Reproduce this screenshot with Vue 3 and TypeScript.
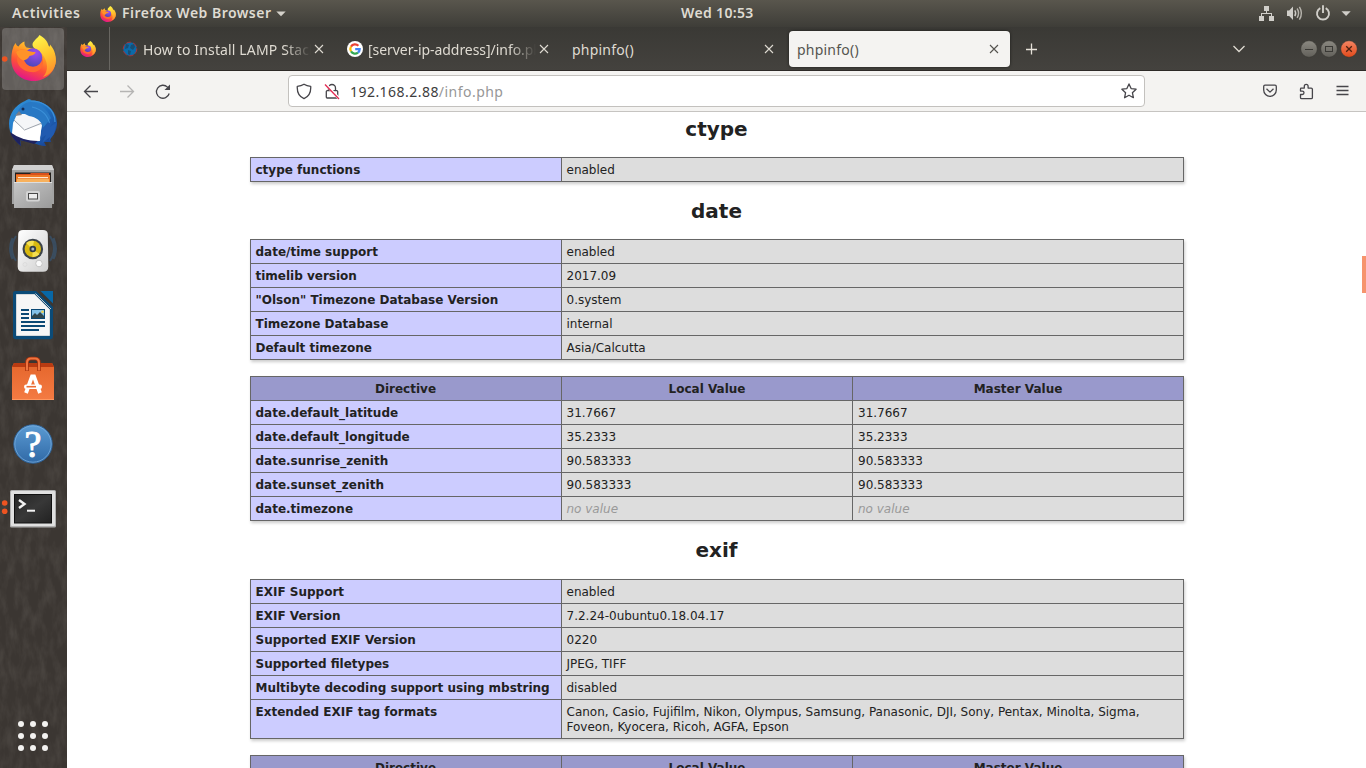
<script setup lang="ts">
interface Tab {
  title: string
  icon?: 'globe' | 'google'
  active?: boolean
}
interface Sheet {
  title?: string
  head?: string[]
  rows: string[][]
}

const tabs: Tab[] = [
  { title: 'How to Install LAMP Stack', icon: 'globe' },
  { title: '[server-ip-address]/info.php', icon: 'google' },
  { title: 'phpinfo()' },
  { title: 'phpinfo()', active: true },
]

const directiveHead = ['Directive', 'Local Value', 'Master Value']

const sheets: Sheet[] = [
  { title: 'ctype', rows: [['ctype functions', 'enabled']] },
  {
    title: 'date',
    rows: [
      ['date/time support', 'enabled'],
      ['timelib version', '2017.09'],
      ['"Olson" Timezone Database Version', '0.system'],
      ['Timezone Database', 'internal'],
      ['Default timezone', 'Asia/Calcutta'],
    ],
  },
  {
    head: directiveHead,
    rows: [
      ['date.default_latitude', '31.7667', '31.7667'],
      ['date.default_longitude', '35.2333', '35.2333'],
      ['date.sunrise_zenith', '90.583333', '90.583333'],
      ['date.sunset_zenith', '90.583333', '90.583333'],
      ['date.timezone', 'no value', 'no value'],
    ],
  },
  {
    title: 'exif',
    rows: [
      ['EXIF Support', 'enabled'],
      ['EXIF Version', '7.2.24-0ubuntu0.18.04.17'],
      ['Supported EXIF Version', '0220'],
      ['Supported filetypes', 'JPEG, TIFF'],
      ['Multibyte decoding support using mbstring', 'disabled'],
      [
        'Extended EXIF tag formats',
        'Canon, Casio, Fujifilm, Nikon, Olympus, Samsung, Panasonic, DJI, Sony, Pentax, Minolta, Sigma, Foveon, Kyocera, Ricoh, AGFA, Epson',
      ],
    ],
  },
  { head: directiveHead, rows: [] },
]
</script>

<template>
  <div class="desktop">
    <svg class="defs" width="0" height="0" aria-hidden="true">
      <defs>
        <linearGradient id="ffBody" x1="0.8" y1="0.05" x2="0.35" y2="1">
          <stop offset="0" stop-color="#ffe23d" />
          <stop offset="0.35" stop-color="#ff9a24" />
          <stop offset="0.65" stop-color="#ff5038" />
          <stop offset="1" stop-color="#e0148c" />
        </linearGradient>
        <linearGradient id="ffFlame" x1="0.3" y1="0" x2="0.6" y2="1">
          <stop offset="0" stop-color="#fff44a" />
          <stop offset="0.5" stop-color="#ffc72e" />
          <stop offset="1" stop-color="#ff8b2c" />
        </linearGradient>
        <radialGradient id="ffCore" cx="0.65" cy="0.25" r="0.8">
          <stop offset="0" stop-color="#a04bf0" />
          <stop offset="1" stop-color="#4a48b8" />
        </radialGradient>
        <symbol id="firefox" viewBox="0 0 45 46">
          <path d="M4.5 8 C5.2 10 6 11 7.500 11.500 C9 9 11 7.500 13.500 6.500 C13.200 9 13.800 11 15.500 12.500 L24 14 L36 10 C42 14 45 20 44.800 26 C44 38 34 46 22.500 46 C10 46 0.5 37 0.3 25 C0.2 18 1.500 12 4.500 8Z" fill="url(#ffBody)" />
          <path d="M28.500 0 C34 3 37 7 38 12 C39 11.500 39 10.500 39 9.500 C43 14 45 19 44.800 26 C44.300 34 39 40 32 42 C38 36 37 26 31 19 C27 15 22 14 21.500 10 C21.500 6 26 4 28.500 0Z" fill="url(#ffFlame)" />
          <path d="M5 17 C7 14.500 11 13.800 15.500 15 C24 20 31 20 32 25 C33 33 27 38 20 37 C11 36 6 30 6 24 C6 21 6 19 5 17Z" fill="#ff6a30" />
          <circle cx="22" cy="22.500" r="9.300" fill="url(#ffCore)" />
          <path d="M5 17 C7 14.500 11 13.800 15.500 15 C18 16.500 21 17 24.500 17 C24.500 19.500 21 20.500 18.500 21 C17 24 14.500 25 12 25.500 C9 24 6 21 5 17Z" fill="#ff9328" />
        </symbol>
      </defs>
    </svg>

    <header class="topbar">
      <span class="activities">Activities</span>
      <span class="app">
        <svg class="app-icon" width="16" height="16"><use href="#firefox" /></svg>
        <span class="app-name">Firefox Web Browser</span>
        <svg width="10" height="6"><path d="M0.300 0.500h9.400L5 5.300z" fill="#d4d1ca" /></svg>
      </span>
      <span class="clock">Wed 10:53</span>
      <svg class="tray" width="100" height="27">
        <g fill="#d0cec9">
          <rect x="11" y="6" width="5" height="5" />
          <rect x="6" y="16" width="5" height="5" />
          <rect x="16" y="16" width="5" height="5" />
          <path d="M13 11h1v2h5v3h-1v-2H9v2H8v-3h5z" />
          <path d="M34 10.500h2.200L40 6.500v13.500l-3.800-4H34z" />
          <path d="M88.500 11.200h9.200l-4.600 4.700z" />
        </g>
        <g fill="none" stroke="#d0cec9">
          <path d="M41.800 10.300q1.800 2.900 0 5.800" stroke-width="1.400" />
          <path d="M44.100 8.500q3 4.700 0 9.400" stroke="#b7b4ad" stroke-width="1.400" />
          <path d="M46.400 6.800q4 6.400 0 12.800" stroke="#b7b4ad" stroke-width="1.400" />
          <path d="M67.300 8.200a6 6 0 1 0 5.400 0" stroke-width="1.900" />
          <path d="M70 5.200v7.800" stroke-width="1.900" />
        </g>
      </svg>
    </header>

    <div class="workspace">
      <aside class="dock">
        <svg class="texture" width="67" height="741">
          <filter id="wood" x="0" y="0" width="100%" height="100%">
            <feTurbulence type="fractalNoise" baseFrequency="0.13 0.05" numOctaves="4" seed="7" />
            <feColorMatrix values="0 0 0 0 0.42  0 0 0 0 0.39  0 0 0 0 0.35  1.500 0 0 0 -0.550" />
          </filter>
          <rect width="67" height="741" filter="url(#wood)" />
        </svg>

        <div class="launcher">
          <svg width="67" height="64">
            <rect x="2" y="1" width="62" height="62" rx="4" fill="#fff" opacity="0.2" />
            <circle cx="4.700" cy="32" r="2.800" fill="#ee5421" />
            <use href="#firefox" x="11" y="8" width="45" height="46" />
          </svg>
        </div>

        <div class="launcher">
          <svg width="67" height="64">
            <defs>
              <linearGradient id="tb" x1="0" y1="0" x2="1" y2="1">
                <stop offset="0" stop-color="#3499e0" />
                <stop offset="0.5" stop-color="#2070c0" />
                <stop offset="1" stop-color="#16398c" />
              </linearGradient>
            </defs>
            <path d="M25 10 C28 7.500 31 8 31 9.500 C44 9 57 19 57 32 C57 38 55 43 50 47 L51 51 L44 51 L46 55 C40 55 37 53 34 52 L20 49 L21 55 C15 50 9 43 9 33 C9 23 15 14 25 10Z" fill="url(#tb)" />
            <path d="M13 32 L17 23 L39 23 L42 30 L40 50 C32 50 25 49 18 47 L12 43Z" fill="#f5f6f8" />
            <path d="M14 31 L24 38 L42 34 L39 50 Q27 51 12 44Z" fill="#fff" />
            <path d="M14 29 L24.500 39 L42 32" fill="none" stroke="#9da3ac" stroke-width="1" />
            <path d="M17 24 C18 17 24 11 31 11 C40 12 47 18 51 27 L43 37 C42 30 36 26 29 25 L23 22Z" fill="#2878c4" />
            <path d="M31 10 C42 10 55 17 55 31 M32 16 C41 18 48 24 50 34" fill="none" stroke="#3b90d8" stroke-width="1.200" />
            <path d="M57 31 L50 36 L53 29 L43 37 L40 48 L46 44 L42 52 L50 46 L49 50 L54 43Z" fill="#215bb0" />
            <path d="M10 41 Q22 50 38 50 L34 53 L20 49 L21 55 Q12 48 10 41Z" fill="#1e225f" />
            <circle cx="23" cy="18" r="1.500" fill="#132a54" />
            <path d="M19 20 L15 25 L22 24Z" fill="#7b7f89" />
          </svg>
        </div>

        <div class="launcher">
          <svg width="67" height="64">
            <defs>
              <linearGradient id="cab" x1="0" y1="0" x2="1" y2="1">
                <stop offset="0" stop-color="#c6c6c6" />
                <stop offset="1" stop-color="#9a9a9a" />
              </linearGradient>
            </defs>
            <path d="M14 10h38l2 5v34H12V15z" fill="#a3a3a3" />
            <path d="M14 10h38l2 5H12z" fill="#d0d0d0" />
            <rect x="15" y="17.500" width="36" height="10" fill="#24201d" />
            <path d="M16 19h14l1-1h18v9H16z" fill="#d9501c" />
            <rect x="16" y="20" width="34" height="7" fill="#ee7925" />
            <rect x="18" y="22" width="30" height="1.200" fill="#ffe7cf" />
            <path d="M17 24h32v3H17z" fill="#f8b15c" />
            <rect x="14" y="27" width="38" height="26" rx="0.500" fill="url(#cab)" />
            <path d="M14 27.500h38" stroke="#dedede" />
            <rect x="26" y="36" width="14" height="10.500" rx="2" fill="#d4d4d4" />
            <rect x="28.500" y="38.500" width="9" height="5.500" fill="#ececec" stroke="#494949" />
          </svg>
        </div>

        <div class="launcher">
          <svg width="67" height="64">
            <defs>
              <linearGradient id="spk" x1="0" y1="0" x2="1" y2="1">
                <stop offset="0" stop-color="#fff" />
                <stop offset="1" stop-color="#cfcfcf" />
              </linearGradient>
            </defs>
            <g fill="none" stroke="#375d82" stroke-width="2" opacity="0.55">
              <path d="M16 17q-8 13 0 25M12.500 19q-5 11 0 21M50 17q8 13 0 25M53.500 19q5 11 0 21" />
            </g>
            <path d="M23 11h20q4.500 0 4.800 4L48.300 47q0.200 5.500-5.300 5.700H23q-5.500-0.200-5.300-5.700L18.200 15q0.300-4 4.800-4z" fill="url(#spk)" />
            <circle cx="32.800" cy="30" r="10.300" fill="#3c434a" />
            <circle cx="32.800" cy="30" r="8.200" fill="#d9b910" />
            <path d="M32.500 30L26 24a9 9 0 0 1 8-2zM32.500 30l7 5a8 8 0 0 1-7 3z" fill="#f5df51" />
            <circle cx="32.800" cy="30" r="3.300" fill="#333c46" />
            <circle cx="32.800" cy="30" r="1.500" fill="#aeb8bf" />
            <circle cx="39" cy="44.500" r="3.300" fill="#fafafa" stroke="#c4c4c4" />
            <circle cx="25" cy="45.500" r="2" fill="none" stroke="#dcdcdc" />
          </svg>
        </div>

        <div class="launcher">
          <svg width="67" height="64">
            <path d="M15.500 8H36l17 17v31.500q0 2.500-2.500 2.500h-35q-2.500 0-2.500-2.500v-46Q13 8 15.500 8z" transform="matrix(1 0 0 0.945 0 0.440)" fill="#0b4b78" />
            <path d="M16.500 11.500h18.200L49.500 26.500v26h-33z" fill="#f6f6f6" stroke="#d5d9dc" />
            <path d="M40.500 8H53v12.500z" fill="#0867a6" />
            <path d="M35.500 10.500L51 26" stroke="#c2c9ce" stroke-width="1" />
            <g fill="#0a4874">
              <path d="M21 26h8v2h-8zM21 30h8v2h-8zM21 34h8v2h-8zM21 38h24v2H21zM21 42h24v2H21zM21 46h18v2H21z" />
              <rect x="31" y="26" width="14" height="10" />
            </g>
            <rect x="32" y="27" width="12" height="8" fill="#83c1e8" />
            <path d="M32 35v-2l3-3 2 2 3-3 4 4v2z" fill="#31464c" />
            <circle cx="42.500" cy="28.700" r="1.300" fill="#f7d348" />
          </svg>
        </div>

        <div class="launcher">
          <svg width="67" height="64">
            <defs>
              <linearGradient id="bag" x1="0" y1="0" x2="0" y2="1">
                <stop offset="0" stop-color="#e5662c" />
                <stop offset="1" stop-color="#f47b43" />
              </linearGradient>
            </defs>
            <path d="M14 16h38l2 4v33H12V20z" fill="url(#bag)" />
            <path d="M14 16h38l2 4H12z" fill="#b93b12" />
            <path d="M12 52.500h42" stroke="#ff9760" />
            <path d="M27 24v-8q0-4.500 4-4.500h4q4 0 4 4.500v8" fill="none" stroke="#a7330e" stroke-width="3.600" />
            <path d="M27 23.500v-7.500q0-4.500 4-4.500h4q4 0 4 4.500v7.500" fill="none" stroke="#f07540" stroke-width="2" />
            <path d="M26 46L32 29.500h2L40 46" fill="none" stroke="#fff" stroke-width="3.800" />
            <rect x="24" y="37.500" width="18" height="4.500" rx="2.200" fill="#fff" />
            <path d="M26.500 39.700h9.500" stroke="#ea6c34" stroke-width="1.600" />
          </svg>
        </div>

        <div class="launcher">
          <svg width="67" height="64">
            <defs>
              <linearGradient id="help" x1="0" y1="0" x2="0" y2="1">
                <stop offset="0" stop-color="#5b9bd3" />
                <stop offset="1" stop-color="#3069a6" />
              </linearGradient>
            </defs>
            <circle cx="33" cy="33" r="19.200" fill="url(#help)" stroke="#2e649c" />
            <circle cx="33" cy="33" r="18.200" fill="none" stroke="#7fb2df" opacity="0.700" />
            <text x="33" y="45.500" class="help-mark">?</text>
          </svg>
        </div>

        <div class="launcher">
          <svg width="67" height="64">
            <defs>
              <linearGradient id="term" x1="0" y1="0" x2="1" y2="1">
                <stop offset="0" stop-color="#262626" />
                <stop offset="0.500" stop-color="#383838" />
                <stop offset="1" stop-color="#222" />
              </linearGradient>
            </defs>
            <circle cx="4.700" cy="28" r="2.800" fill="#ee5421" />
            <circle cx="4.700" cy="36.300" r="2.800" fill="#ee5421" />
            <rect x="10" y="15" width="46" height="37.500" rx="1.500" fill="#b0b0b0" />
            <rect x="11" y="16" width="44" height="35" rx="1" fill="#e0e0e0" />
            <rect x="14" y="19" width="38" height="29.500" fill="#111" />
            <rect x="15" y="20" width="36" height="27.500" fill="url(#term)" />
            <path d="M19 25l5.500 4-5.500 4" fill="none" stroke="#f2f2f2" stroke-width="2.400" />
            <path d="M27 35.700h8" stroke="#f2f2f2" stroke-width="2" />
          </svg>
        </div>

        <svg class="apps" width="67" height="64">
          <g fill="#f3f2f0">
            <template v-for="r in 3" :key="r">
              <circle v-for="c in 3" :key="c" :cx="9 + c * 12" :cy="20 + (r - 1) * 12" r="3" />
            </template>
          </g>
        </svg>
      </aside>

      <main class="browser">
        <div class="tabstrip">
          <div class="pinned">
            <svg width="16" height="16"><use href="#firefox" /></svg>
          </div>
          <div v-for="(t, i) in tabs" :key="i" class="tab" :class="[t.icon, { active: t.active }]">
            <svg v-if="t.icon === 'globe'" class="favicon" width="16" height="16">
              <circle cx="8" cy="8" r="6.800" fill="#0b6aa8" stroke="#a5323c" stroke-dasharray="5 2" />
              <path d="M4 3l3 1-1 3-3 1zM9 4l3-1 1 3-2 3-3-2zM6 9l3 1-1 4-2-1z" fill="#174e74" />
            </svg>
            <svg v-if="t.icon === 'google'" class="favicon" width="16" height="16">
              <circle cx="8" cy="8" r="8" fill="#fff" />
              <g fill="none" stroke-width="2.200">
                <path d="M4 5.600A4.700 4.700 0 0 1 11.400 4.800" stroke="#ea4335" />
                <path d="M4 5.600A4.700 4.700 0 0 0 4 10.400" stroke="#fbbc05" />
                <path d="M4 10.400A4.700 4.700 0 0 0 11 11.600" stroke="#34a853" />
                <path d="M11 11.600A4.700 4.700 0 0 0 12.700 8.100H8.200" stroke="#4285f4" />
              </g>
            </svg>
            <span class="title" :class="{ faded: t.icon }">{{ t.title }}</span>
            <svg class="close" width="10" height="10">
              <path d="M1 1l8 8M9 1l-8 8" fill="none" stroke="currentColor" stroke-width="1.100" />
            </svg>
          </div>
          <svg class="plus" width="12" height="12">
            <path d="M6.500 0.500v11M1 6.500h11" stroke="#e6e2d9" stroke-width="1.300" />
          </svg>
          <svg class="chev" width="14" height="8">
            <path d="M1.500 1L7 6.500 12.500 1" fill="none" stroke="#dfdbd2" stroke-width="1.300" />
          </svg>
          <svg class="controls" width="58" height="18">
            <defs>
              <linearGradient id="gbtn" x1="0" y1="0" x2="0" y2="1">
                <stop offset="0" stop-color="#8b8981" />
                <stop offset="1" stop-color="#62605a" />
              </linearGradient>
              <linearGradient id="obtn" x1="0" y1="0" x2="0" y2="1">
                <stop offset="0" stop-color="#f58563" />
                <stop offset="1" stop-color="#e14a1b" />
              </linearGradient>
            </defs>
            <g stroke="#33322e" stroke-width="0.400">
              <circle cx="9" cy="9" r="8.200" fill="url(#gbtn)" />
              <circle cx="29" cy="9" r="8.200" fill="url(#gbtn)" />
              <circle cx="49" cy="9" r="8.200" fill="url(#obtn)" />
            </g>
            <g fill="none" stroke="#3a3935">
              <path d="M5 9.500h8" />
              <rect x="25.500" y="6.500" width="7" height="5" />
              <path d="M46.200 6.200l5.600 5.600M51.800 6.200l-5.600 5.600" stroke="#4e2111" stroke-width="1.300" />
            </g>
          </svg>
        </div>

        <div class="toolbar">
          <svg class="btn" width="36" height="40">
            <path d="M11.500 20.500H25M17.500 14.500l-6 6 6 6" fill="none" stroke="#46454a" stroke-width="1.300" />
          </svg>
          <svg class="btn" width="36" height="40">
            <path d="M11 20.500h13.500M18.500 14.500l6 6-6 6" fill="none" stroke="#b5b4b3" stroke-width="1.300" />
          </svg>
          <svg class="btn" width="36" height="40">
            <path d="M24.200 22.500a6.500 6.500 0 1 1-1.700-6.400l1.200 1.200" fill="none" stroke="#46454a" stroke-width="1.300" />
            <path d="M25 13.500v5.500h-5.500z" fill="#46454a" />
          </svg>
          <div class="urlbar">
            <svg class="shield" width="16" height="17">
              <path d="M8 1.200C6 2.500 4 3.100 1.300 3.300 0.900 9 3 13.500 8 15.700c5-2.200 7.100-6.700 6.700-12.400C12 3.100 10 2.500 8 1.200z" fill="none" stroke="#46454a" stroke-width="1.300" stroke-linejoin="round" />
            </svg>
            <svg class="lock" width="16" height="17">
              <path d="M4.500 7.500V5a3.500 3.500 0 0 1 7 0v2.500M3.200 7.600h9.600q0.900 0 0.900 0.900v5.600q0 0.900-0.900 0.900H3.200q-0.900 0-0.900-0.900V8.500q0-0.900 0.900-0.900z" fill="none" stroke="#46454a" stroke-width="1.300" />
              <path d="M1.500 1L15.500 16" stroke="#fff" stroke-width="2.800" />
              <path d="M1 1.500L15 16" stroke="#e22850" stroke-width="1.300" />
            </svg>
            <span class="url"><b>192.168.2.88</b>/info.php</span>
            <svg class="star" width="16" height="16">
              <path d="M8 0.900l2.100 4.700 5 0.600-3.700 3.500 1 5L8 12.300l-4.400 2.400 1-5L0.900 6.200l5-0.600z" fill="none" stroke="#46454a" stroke-width="1.300" stroke-linejoin="round" />
            </svg>
          </div>
          <svg class="actions" width="109" height="40" fill="none" stroke="#46454a" stroke-width="1.300">
            <path d="M14 14.200h10q1.300 0 1.300 1.300V19a6.300 6.300 0 0 1-12.600 0v-3.500q0-1.300 1.300-1.300zM15.500 17.800l3.500 3.300 3.500-3.300" stroke-linejoin="round" />
            <path d="M50 17.100h3.300v-1.900a1.900 1.900 0 0 1 3.800 0v1.900h3.100q1.200 0 1.200 1.200v8.100q0 1.200-1.200 1.200H50.700q-1.200 0-1.200-1.200v-2.900h1.800a1.600 1.600 0 0 0 0-3.400h-1.800V18.300q0-0.800 0.500-1.200z" stroke-linejoin="round" />
            <path d="M85.500 15.500h12M85.500 19.500h12M85.500 23.500h12" />
          </svg>
        </div>

        <section class="page">
          <template v-for="(s, i) in sheets" :key="i">
            <h2 v-if="s.title" :class="s.title">{{ s.title }}</h2>
            <div v-else class="gap"></div>
            <div class="sheet" :class="{ three: s.head }">
              <template v-if="s.head">
                <div v-for="h in s.head" :key="h" class="cell th">{{ h }}</div>
              </template>
              <template v-for="(row, r) in s.rows" :key="r">
                <div v-for="(c, k) in row" :key="k" class="cell" :class="{ key: k === 0, last: k === 2 }">
                  <i v-if="c === 'no value'">{{ c }}</i><template v-else>{{ c }}</template>
                </div>
              </template>
            </div>
          </template>
          <div class="thumb"></div>
        </section>
      </main>
    </div>
  </div>
</template>

<style>
html,
body {
  overflow: hidden;
}
</style>

<style scoped>
.desktop {
  width: 1366px;
  height: 768px;
  overflow: hidden;
  display: flex;
  flex-direction: column;
  font-family: 'Noto Sans', 'Open Sans', sans-serif;
}
svg {
  display: block;
  flex: none;
}
.topbar {
  height: 27px;
  flex: none;
  display: flex;
  align-items: center;
  background: linear-gradient(#59564d, #3e3d38);
  color: #dfdbd2;
  font-size: 14px;
  font-weight: 600;
  line-height: 20px;
}
.activities {
  width: 69px;
  margin-left: 12px;
  letter-spacing: 0.6px;
}
.app {
  display: flex;
  align-items: center;
  margin-left: 19px;
  width: 186px;
}
.app-name {
  margin: 0 5px 0 6px;
  width: 149px;
  white-space: nowrap;
  letter-spacing: 0.48px;
}
.clock {
  margin-left: 395px;
  white-space: nowrap;
  letter-spacing: 0.35px;
}
.activities,
.app-name,
.clock {
  padding-bottom: 1px;
}
.tray {
  margin-left: auto;
  margin-right: 13px;
}
.workspace {
  flex: 1;
  display: flex;
  min-height: 0;
}
.dock {
  width: 67px;
  flex: none;
  position: relative;
  display: flex;
  flex-direction: column;
  background: #3b3632;
}
.texture {
  position: absolute;
  inset: 0;
  opacity: 0.17;
}
.launcher {
  height: 64px;
  position: relative;
}
.help-mark {
  font: 38px 'Liberation Serif', serif;
  fill: #fff;
  stroke: #fff;
  stroke-width: 1px;
  text-anchor: middle;
}
.apps {
  margin-top: auto;
  position: relative;
}
.browser {
  flex: 1;
  display: flex;
  flex-direction: column;
  min-width: 0;
}
.tabstrip {
  height: 43px;
  flex: none;
  display: flex;
  align-items: center;
  background: linear-gradient(#3a3935, #44423e);
  border-bottom: 1px solid #2d2a27;
}
.pinned {
  width: 42px;
  height: 43px;
  box-sizing: content-box;
  margin-right: 4px;
  display: flex;
  align-items: center;
  justify-content: center;
  border-right: 1px solid #686661;
}
.tab {
  width: 221px;
  height: 36px;
  box-sizing: border-box;
  margin-right: 4px;
  padding: 0 11px 0 8px;
  display: flex;
  align-items: center;
  border-radius: 4px;
  color: #dfdbd2;
  font-size: 14px;
}
.tab.active {
  background: #f4f3f1;
  color: #55534f;
  box-shadow: 0 0 3px #1c1b19;
}
.favicon {
  margin-right: 5px;
}
.title {
  flex: 1;
  padding-top: 2px;
  overflow: hidden;
  white-space: nowrap;
  letter-spacing: 0.22px;
}
.faded {
  margin-right: 3px;
  mask-image: linear-gradient(to right, #000 84%, transparent);
}
.globe .title {
  letter-spacing: 0.14px;
}
.google .title {
  letter-spacing: -0.05px;
}
.plus {
  margin-left: 11px;
}
.chev {
  margin-left: auto;
}
.controls {
  margin: 0 8px 0 54px;
}
.toolbar {
  height: 40px;
  flex: none;
  display: flex;
  align-items: center;
  padding: 0 6px;
  background: #f4f3f1;
  border-bottom: 1px solid #c6c4c1;
}
.urlbar {
  width: 857px;
  height: 32px;
  box-sizing: border-box;
  margin-left: 107px;
  padding: 0 7px;
  display: flex;
  align-items: center;
  background: #fff;
  border: 1px solid #c3c1be;
  border-radius: 4px;
}
.lock {
  margin-left: 12px;
}
.url {
  margin-left: 10px;
  font-size: 14px;
  letter-spacing: 0.46px;
  color: #979797;
}
.url b {
  font-weight: 400;
  color: #3d3d3d;
}
.star {
  margin-left: auto;
}
.actions {
  margin-left: auto;
}
.page {
  flex: 1;
  min-height: 0;
  overflow: hidden;
  position: relative;
  background: #fff;
  color: #222;
  font: 12px/15px 'DejaVu Sans', sans-serif;
  display: flex;
  flex-direction: column;
  align-items: center;
}
h2 {
  height: 57px;
  margin: 0;
  flex: none;
  font-size: 20px;
  line-height: 58px;
}
h2.ctype {
  height: 45px;
  line-height: 34px;
}
h2.exif {
  height: 58px;
}
.gap {
  height: 16px;
  flex: none;
}
.sheet {
  flex: none;
  display: grid;
  grid-template-columns: 311px 622px;
  border-top: 1px solid #666;
  border-left: 1px solid #666;
  box-shadow: 1px 2px 3px #ccc;
}
.sheet.three {
  grid-template-columns: 311px 291px 331px;
}
.cell {
  box-sizing: border-box;
  padding: 5px 4px 3px 5px;
  border-right: 1px solid #666;
  border-bottom: 1px solid #666;
  background: #ddd;
}
.cell.last {
  padding-left: 5.5px;
}
.key {
  background: #ccf;
  font-weight: bold;
}
.th {
  background: #99c;
  font-weight: bold;
  text-align: center;
}
.th:first-child {
  padding-left: 4px;
}
.cell i {
  color: #999;
}
.thumb {
  position: absolute;
  right: 0;
  top: 144px;
  width: 4px;
  height: 37px;
  background: #f6946d;
}
</style>
